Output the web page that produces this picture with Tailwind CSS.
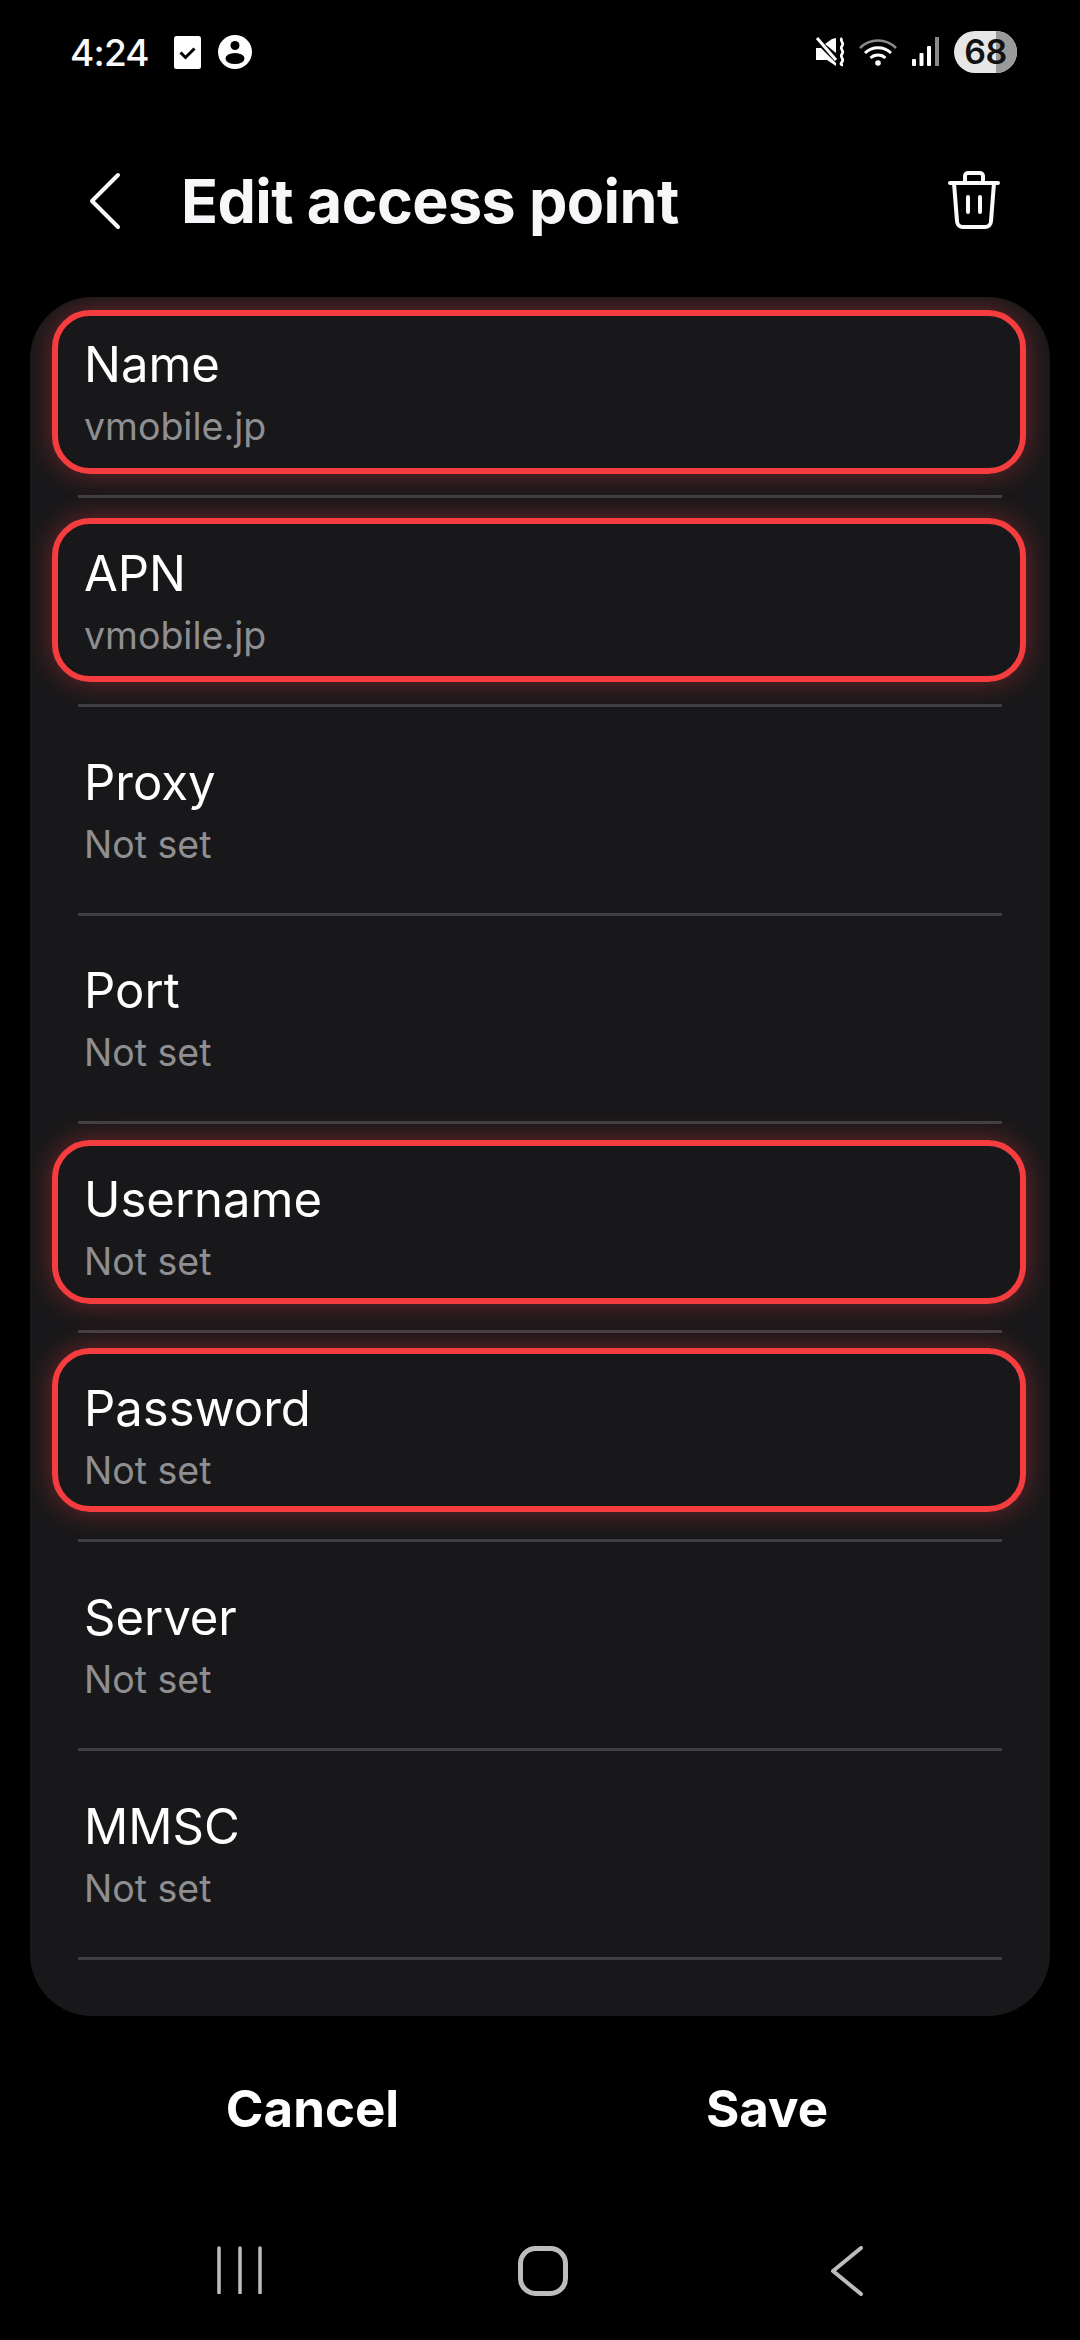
<!DOCTYPE html>
<html lang="en">
<head>
<meta charset="UTF-8">
<meta name="viewport" content="width=device-width, initial-scale=1.0">
<title>Edit access point</title>
<script src="https://cdn.jsdelivr.net/npm/@tailwindcss/browser@4"></script>
</head>
<body class="bg-black">
<div class="w-[1080px] h-[2340px] flex flex-col bg-black text-white font-['Inter',sans-serif] overflow-hidden">

  <!-- status bar -->
  <div class="h-[100px] flex items-start justify-between pl-[70px] pr-[63px] pt-[31px]">
    <div class="flex items-center h-[42px] text-[#fafafa]">
      <span class="text-[37px] font-medium leading-none w-[104px] tracking-[-0.8px]">4:24</span>
      <svg class="w-[27px] h-[33px]" viewBox="0 0 27 33"><rect width="27" height="33" rx="2.5" fill="#fff"/><path d="M6.5 16.5l5 5 9-9" fill="none" stroke="#000" stroke-width="3"/></svg>
      <svg class="w-[34px] h-[34px] ml-[17px]" viewBox="0 0 34 34"><circle cx="17" cy="17" r="17" fill="#fff"/><circle cx="17" cy="10.5" r="4.5" fill="#000"/><ellipse cx="17" cy="23.5" rx="9.5" ry="5.5" fill="#000"/></svg>
    </div>
    <div class="flex items-center h-[42px]">
      <svg class="w-[31px] h-[30px]" viewBox="0 0 31 30"><path d="M1 11h5l15 15v3l-9-6H1z" fill="#fff"/><path d="M10 7l7-5 4-1v15z" fill="#fff"/><path d="M2 1l19 22" stroke="#fff" stroke-width="3"/><path d="M27 1c-3 3 3 5 0 8s3 5 0 8 3 5 0 8 1 3 1 3" fill="none" stroke="#fff" stroke-width="2.6"/></svg>
      <svg class="w-[38px] h-[28px] ml-[13px]" viewBox="0 0 38 28"><path d="M1 10C11 0 27 0 37 10" fill="none" stroke="#8a8a8a" stroke-width="2.6"/><path d="M6 15c7-7 19-7 26 0" fill="none" stroke="#fff" stroke-width="2.8"/><path d="M11.500 20c4-4 11-4 15 0" fill="none" stroke="#fff" stroke-width="2.800"/><circle cx="19" cy="25" r="2.800" fill="#fff"/></svg>
      <svg class="w-[28px] h-[30px] ml-[15px]" viewBox="0 0 28 30"><rect x="0" y="22" width="4" height="7" rx="1" fill="#fff"/><rect x="7.500" y="16" width="4" height="13" rx="1" fill="#fff"/><rect x="15" y="9" width="4" height="20" rx="1" fill="#fff"/><rect x="23" y="0" width="4" height="29" fill="#8a8a8a"/></svg>
      <div class="relative ml-[14px] w-[63px] h-[42px] rounded-[21px] overflow-hidden bg-[#e6e6e6] flex items-center justify-center">
        <div class="absolute right-0 top-0 bottom-0 w-[21px] bg-[#9a9a9a]"></div>
        <span class="relative text-[34px] font-semibold leading-none text-[#111] tracking-[-0.5px]">68</span>
      </div>
    </div>
  </div>

  <!-- header -->
  <div class="h-[197px] flex items-start pl-[88px] pr-[80px] pt-[71px]">
    <svg class="w-[34px] h-[60px]" viewBox="0 0 34 60"><path d="M30 4L4 30l26 26" fill="none" stroke="#fafafa" stroke-width="4" stroke-linecap="round" stroke-linejoin="round"/></svg>
    <h1 class="ml-[59px] text-[61px] font-bold leading-[60px] text-[#f7f7fa] tracking-[-0.6px]">Edit access point</h1>
    <svg class="ml-auto w-[52px] h-[58px]" viewBox="0 0 52 58"><path d="M2 12h48M17 12V5a3 3 0 0 1 3-3h12a3 3 0 0 1 3 3v7M6 12l3 38a6 6 0 0 0 6 6h22a6 6 0 0 0 6-6l3-38M20 26v15M32 26v15" fill="none" stroke="#fafafa" stroke-width="4" stroke-linecap="round" stroke-linejoin="round"/></svg>
  </div>

  <!-- form card -->
  <div class="mx-[30px] w-[1020px] h-[1719px] rounded-[62px] bg-[#18181a] overflow-hidden flex flex-col">
    <div class="relative h-[201px] flex flex-col justify-end">
      <div class="absolute left-[22px] right-[24px] bottom-[24px] h-[164px] rounded-[38px] border-[6px] border-[#f53c3f] shadow-[0_0_28px_rgba(245,60,63,0.4)]"></div>
      <div class="relative pl-[54px] text-[49px] leading-[60px]">Name</div>
      <div class="relative pl-[54px] mt-[9px] mb-[45px] text-[37.5px] leading-[46px] text-[#8f8f92]">vmobile.jp</div>
      <div class="relative mx-[48px] h-[3px] bg-[#3f3f41]"></div>
    </div>
    <div class="relative h-[209px] flex flex-col justify-end">
      <div class="absolute left-[22px] right-[24px] bottom-[25px] h-[164px] rounded-[38px] border-[6px] border-[#f53c3f] shadow-[0_0_28px_rgba(245,60,63,0.4)]"></div>
      <div class="relative pl-[54px] text-[49px] leading-[60px]">APN</div>
      <div class="relative pl-[54px] mt-[9px] mb-[45px] text-[37.5px] leading-[46px] text-[#8f8f92]">vmobile.jp</div>
      <div class="relative mx-[48px] h-[3px] bg-[#3f3f41]"></div>
    </div>
    <div class="relative h-[209px] flex flex-col justify-end">
      <div class="relative pl-[54px] text-[49px] leading-[60px]">Proxy</div>
      <div class="relative pl-[54px] mt-[9px] mb-[45px] text-[37.5px] leading-[46px] text-[#8f8f92]">Not set</div>
      <div class="relative mx-[48px] h-[3px] bg-[#3f3f41]"></div>
    </div>
    <div class="relative h-[208px] flex flex-col justify-end">
      <div class="relative pl-[54px] text-[49px] leading-[60px]">Port</div>
      <div class="relative pl-[54px] mt-[9px] mb-[45px] text-[37.5px] leading-[46px] text-[#8f8f92]">Not set</div>
      <div class="relative mx-[48px] h-[3px] bg-[#3f3f41]"></div>
    </div>
    <div class="relative h-[209px] flex flex-col justify-end">
      <div class="absolute left-[22px] right-[24px] bottom-[29px] h-[164px] rounded-[38px] border-[6px] border-[#f53c3f] shadow-[0_0_28px_rgba(245,60,63,0.4)]"></div>
      <div class="relative pl-[54px] text-[49px] leading-[60px]">Username</div>
      <div class="relative pl-[54px] mt-[9px] mb-[45px] text-[37.5px] leading-[46px] text-[#8f8f92]">Not set</div>
      <div class="relative mx-[48px] h-[3px] bg-[#3f3f41]"></div>
    </div>
    <div class="relative h-[209px] flex flex-col justify-end">
      <div class="absolute left-[22px] right-[24px] bottom-[30px] h-[164px] rounded-[38px] border-[6px] border-[#f53c3f] shadow-[0_0_28px_rgba(245,60,63,0.4)]"></div>
      <div class="relative pl-[54px] text-[49px] leading-[60px]">Password</div>
      <div class="relative pl-[54px] mt-[9px] mb-[45px] text-[37.5px] leading-[46px] text-[#8f8f92]">Not set</div>
      <div class="relative mx-[48px] h-[3px] bg-[#3f3f41]"></div>
    </div>
    <div class="relative h-[209px] flex flex-col justify-end">
      <div class="relative pl-[54px] text-[49px] leading-[60px]">Server</div>
      <div class="relative pl-[54px] mt-[9px] mb-[45px] text-[37.5px] leading-[46px] text-[#8f8f92]">Not set</div>
      <div class="relative mx-[48px] h-[3px] bg-[#3f3f41]"></div>
    </div>
    <div class="relative h-[209px] flex flex-col justify-end">
      <div class="relative pl-[54px] text-[49px] leading-[60px]">MMSC</div>
      <div class="relative pl-[54px] mt-[9px] mb-[45px] text-[37.5px] leading-[46px] text-[#8f8f92]">Not set</div>
      <div class="relative mx-[48px] h-[3px] bg-[#3f3f41]"></div>
    </div>
  </div>

  <!-- actions -->
  <div class="h-[184px] flex items-center">
    <div class="w-[625px] text-center text-[51px] font-bold leading-none">Cancel</div>
    <div class="w-[284px] text-center text-[51px] font-bold leading-none">Save</div>
  </div>

  <!-- nav bar -->
  <div class="h-[140px] relative flex items-start pt-[46px]">
    <svg class="ml-[217px] w-[46px] h-[48px]" viewBox="0 0 46 48"><path d="M2 2v45M23 2v45M43 2v45" fill="none" stroke="#bdbdbd" stroke-width="3.500" stroke-linecap="round"/></svg>
    <svg class="ml-[255px] w-[50px] h-[50px]" viewBox="0 0 50 50"><rect x="2.500" y="2.500" width="45" height="45" rx="15" fill="none" stroke="#bdbdbd" stroke-width="5"/></svg>
    <svg class="ml-[262px] w-[34px] h-[50px]" viewBox="0 0 34 50"><path d="M31 2L3 25l28 23" fill="none" stroke="#bdbdbd" stroke-width="4" stroke-linecap="round" stroke-linejoin="round"/></svg>
  </div>
</div>
</body>
</html>
